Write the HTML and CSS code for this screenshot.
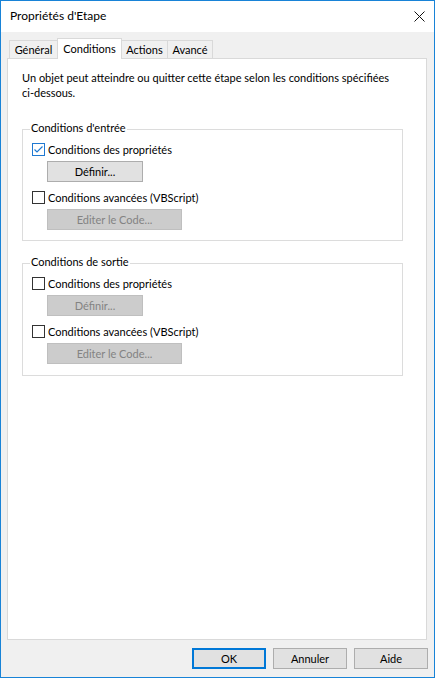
FILE: index.html
```html
<!DOCTYPE html>
<html lang="fr">
<head>
<meta charset="utf-8">
<title>Propriétés d'Etape</title>
<link rel="stylesheet" href="styles.css">
</head>
<body>
<div class="window">
  <div class="titlebar">
    <span class="title">Propriétés d'Etape</span>
    <span class="close" aria-label="Fermer"><svg width="11" height="11" viewBox="0 0 11 11"><path d="M0.5 0.5 L10.5 10.5 M10.5 0.5 L0.5 10.5" stroke="#111" stroke-width="1" fill="none"/></svg></span>
  </div>
  <div class="client">
    <div class="tabs">
      <div class="tab t-general">Général</div>
      <div class="tab active t-conditions">Conditions</div>
      <div class="tab t-actions">Actions</div>
      <div class="tab t-avance">Avancé</div>
    </div>
    <div class="panel">
      <p class="intro">Un objet peut atteindre ou quitter cette étape selon les conditions spécifiées<br>ci-dessous.</p>

      <div class="group">
        <div class="legend">Conditions d'entrée</div>
        <div class="check-row">
          <span class="box checked"><svg width="13" height="13" viewBox="0 0 13 13"><path d="M2.5 6.5 L5 9 L10.5 3.5" stroke="#1f79d2" stroke-width="1.2" fill="none"/></svg></span>
          <span class="label">Conditions des propriétés</span>
        </div>
        <div class="btn btn-def">Définir...</div>
        <div class="check-row row-2">
          <span class="box"></span>
          <span class="label">Conditions avancées (VBScript)</span>
        </div>
        <div class="btn btn-code disabled">Editer le Code...</div>
      </div>

      <div class="group group-exit">
        <div class="legend">Conditions de sortie</div>
        <div class="check-row">
          <span class="box"></span>
          <span class="label">Conditions des propriétés</span>
        </div>
        <div class="btn btn-def disabled">Définir...</div>
        <div class="check-row row-2">
          <span class="box"></span>
          <span class="label">Conditions avancées (VBScript)</span>
        </div>
        <div class="btn btn-code disabled">Editer le Code...</div>
      </div>
    </div>
    <div class="footer">
      <div class="btn dlg default">OK</div>
      <div class="btn dlg">Annuler</div>
      <div class="btn dlg">Aide</div>
    </div>
  </div>
</div>
</body>
</html>
```
FILE: styles.css
```css
* { box-sizing: border-box; }
html, body { margin: 0; padding: 0; }
body {
  font-family: Lato, "Noto Sans", sans-serif;
  font-size: 11px;
  color: #000;
  background: #fff;
}
.window {
  width: 435px;
  height: 678px;
  border: 1px solid #1883d7;
  display: flex;
  flex-direction: column;
  background: #f0f0f0;
}
.titlebar {
  height: 31px;
  flex: none;
  background: #fff;
  display: flex;
  align-items: center;
  justify-content: space-between;
  padding-left: 9px;
  padding-bottom: 1px;
}
.title { font-size: 12px; line-height: 16px; }
.close {
  width: 30px;
  height: 30px;
  display: flex;
  align-items: center;
  justify-content: center;
}
.close svg { display: block; }
.client {
  flex: 1;
  display: flex;
  flex-direction: column;
  padding: 6px 7px 8px 6px;
}
.tabs {
  height: 20px;
  flex: none;
  display: flex;
  align-items: flex-end;
  padding-left: 2px;
}
.tab {
  height: 18px;
  border: 1px solid #d9d9d9;
  border-bottom: none;
  background: #f0f0f0;
  line-height: 17px;
  text-align: center;
  margin-left: -1px;
}
.tab:first-child { margin-left: 0; }
.tab.active {
  height: 21px;
  margin-bottom: -1px;
  background: #fff;
  position: relative;
  z-index: 1;
  line-height: 19px;
}
.t-general { width: 49px; }
.t-conditions { width: 65px; }
.t-actions { width: 47px; }
.t-avance { width: 46px; }
.panel {
  flex: 1;
  background: #fff;
  border: 1px solid #d9d9d9;
  padding: 0 0 0 14px;
}
.intro {
  margin: 11px 0 0;
  line-height: 15px;
}
.group {
  width: 381px;
  margin-top: 29px;
  border: 1px solid #dcdcdc;
  padding: 0 0 10px 9px;
}
.group-exit { margin-top: 22px; padding-bottom: 11px; }
.legend {
  width: max-content;
  margin: -9px 0 0 -2px;
  padding: 0 1px;
  background: #fff;
  line-height: 14px;
}
.check-row {
  height: 13px;
  margin-top: 8px;
  display: flex;
  align-items: center;
  gap: 3px;
}
.check-row.row-2 { margin-top: 9px; }
.box {
  width: 13px;
  height: 13px;
  flex: none;
  border: 1px solid #333;
  background: #fff;
}
.box.checked { border-color: #1f79d2; }
.box svg { display: block; margin: -1px; }
.label { line-height: 13px; white-space: nowrap; }
.btn {
  height: 21px;
  border: 1px solid #adadad;
  background: #e1e1e1;
  text-align: center;
  line-height: 19px;
}
.group .btn { margin: 5px 0 0 15px; }
.btn-def { width: 96px; }
.btn-code { width: 135px; }
.btn.disabled {
  background: #cccccc;
  border-color: #bfbfbf;
  color: #838383;
}
.footer {
  flex: none;
  display: flex;
  justify-content: flex-end;
  gap: 7px;
  margin-top: 8px;
  margin-right: -1px;
}
.btn.dlg { width: 74px; }
.btn.default {
  border: 2px solid #0078d7;
  line-height: 17px;
}
```
